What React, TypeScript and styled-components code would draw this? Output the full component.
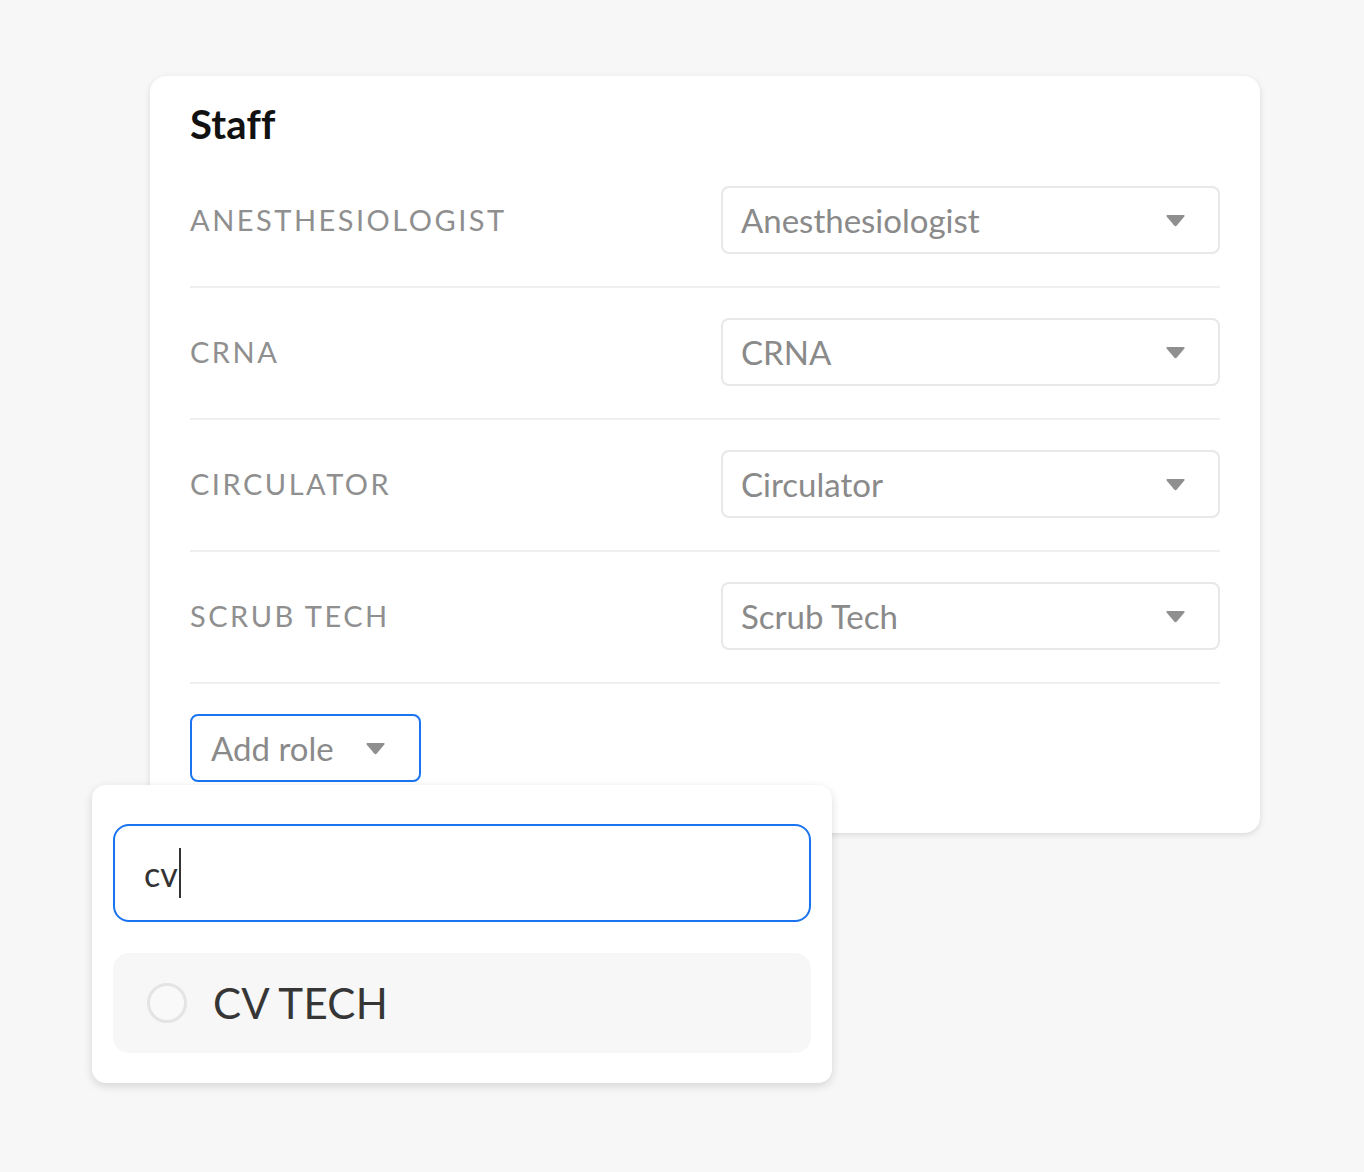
import React from "react";
import styled, { createGlobalStyle } from "styled-components";

const Global = createGlobalStyle`
  html, body { margin: 0; padding: 0; background: #f7f7f7; }
  body { font-family: Lato, "Noto Sans", "Liberation Sans", sans-serif; -webkit-font-smoothing: antialiased; }
`;

const Page = styled.div`
  padding: 76px 104px 88px 150px;
  min-height: 1172px;
  box-sizing: border-box;
`;

const Card = styled.section`
  width: 1110px;
  box-sizing: border-box;
  background: #fff;
  border-radius: 16px;
  box-shadow: 0 2px 6px rgba(0, 0, 0, 0.12);
  padding: 22px 40px 51px 40px;
`;

const Title = styled.h2`
  margin: 0;
  font-size: 40px;
  line-height: 52px;
  font-weight: 700;
  color: #111;
  letter-spacing: 0.2px;
`;

const List = styled.div`
  display: flex;
  flex-direction: column;
  margin-top: 6px;
`;

const Row = styled.div`
  display: grid;
  grid-template-columns: 1fr 499px;
  align-items: center;
  padding: 30px 0 32px;
  border-bottom: 2px solid #efefef;
`;

const Label = styled.span`
  font-size: 29px;
  line-height: 36px;
  color: #8f8f8f;
  letter-spacing: 2.5px;
  text-transform: uppercase;
`;

const Select = styled.div`
  height: 68px;
  box-sizing: border-box;
  border: 2px solid #e8e8e8;
  border-radius: 8px;
  display: flex;
  align-items: center;
  justify-content: space-between;
  padding: 0 32px 0 18px;
  font-size: 33px;
  color: #8a8a8a;
`;

const Chevron = ({ size = 21 }: { size?: number }) => (
  <svg width={size} height={13} viewBox="0 0 21 13">
    <path d="M2.5 1 H18.5 Q20.5 1 19.2 2.8 L11.8 11.5 Q10.5 12.8 9.2 11.5 L1.8 2.8 Q0.5 1 2.5 1 Z" fill="#8f8f8f" />
  </svg>
);

const AddWrap = styled.div`
  position: relative;
  margin-top: 30px;
  width: 231px;
`;

const AddButton = styled.div`
  height: 68px;
  width: 231px;
  box-sizing: border-box;
  border: 2px solid #1a73f0;
  border-radius: 8px;
  display: flex;
  align-items: center;
  justify-content: space-between;
  padding: 0 33px 0 19px;
  font-size: 33px;
  color: #8a8a8a;
`;

const Popover = styled.div`
  position: absolute;
  left: -98px;
  top: 71px;
  width: 740px;
  box-sizing: border-box;
  background: #fff;
  border-radius: 14px;
  box-shadow: 0 3px 10px rgba(0, 0, 0, 0.14);
  padding: 39px 21px 30px 21px;
  display: flex;
  flex-direction: column;
  gap: 31px;
  z-index: 2;
`;

const SearchBox = styled.div`
  height: 98px;
  box-sizing: border-box;
  border: 2px solid #1a73f0;
  border-radius: 16px;
  display: flex;
  align-items: center;
  padding: 0 29px;
  font-size: 34px;
  color: #333;
`;

const Caret = styled.span`
  display: inline-block;
  width: 2px;
  height: 50px;
  background: #333;
  margin-left: 1px;
`;

const Option = styled.div`
  height: 100px;
  border-radius: 16px;
  background: #f7f7f7;
  display: flex;
  align-items: center;
  padding: 0 34px;
  gap: 26px;
`;

const Radio = styled.span`
  width: 40px;
  height: 40px;
  box-sizing: border-box;
  border-radius: 50%;
  border: 3px solid #e4e4e4;
  background: #f9f9f9;
`;

const OptionText = styled.span`
  font-size: 42px;
  color: #363636;
  letter-spacing: 0.3px;
`;

const roles = [
  { label: "Anesthesiologist", value: "Anesthesiologist" },
  { label: "CRNA", value: "CRNA" },
  { label: "Circulator", value: "Circulator" },
  { label: "Scrub Tech", value: "Scrub Tech" },
];

export default function App() {
  return (
    <>
      <Global />
      <Page>
        <Card>
          <Title>Staff</Title>
          <List>
            {roles.map((r) => (
              <Row key={r.label}>
                <Label>{r.label}</Label>
                <Select>
                  <span>{r.value}</span>
                  <Chevron />
                </Select>
              </Row>
            ))}
          </List>
          <AddWrap>
            <AddButton>
              <span>Add role</span>
              <Chevron />
            </AddButton>
            <Popover>
              <SearchBox>
                <span>cv</span>
                <Caret />
              </SearchBox>
              <Option>
                <Radio />
                <OptionText>CV TECH</OptionText>
              </Option>
            </Popover>
          </AddWrap>
        </Card>
      </Page>
    </>
  );
}
